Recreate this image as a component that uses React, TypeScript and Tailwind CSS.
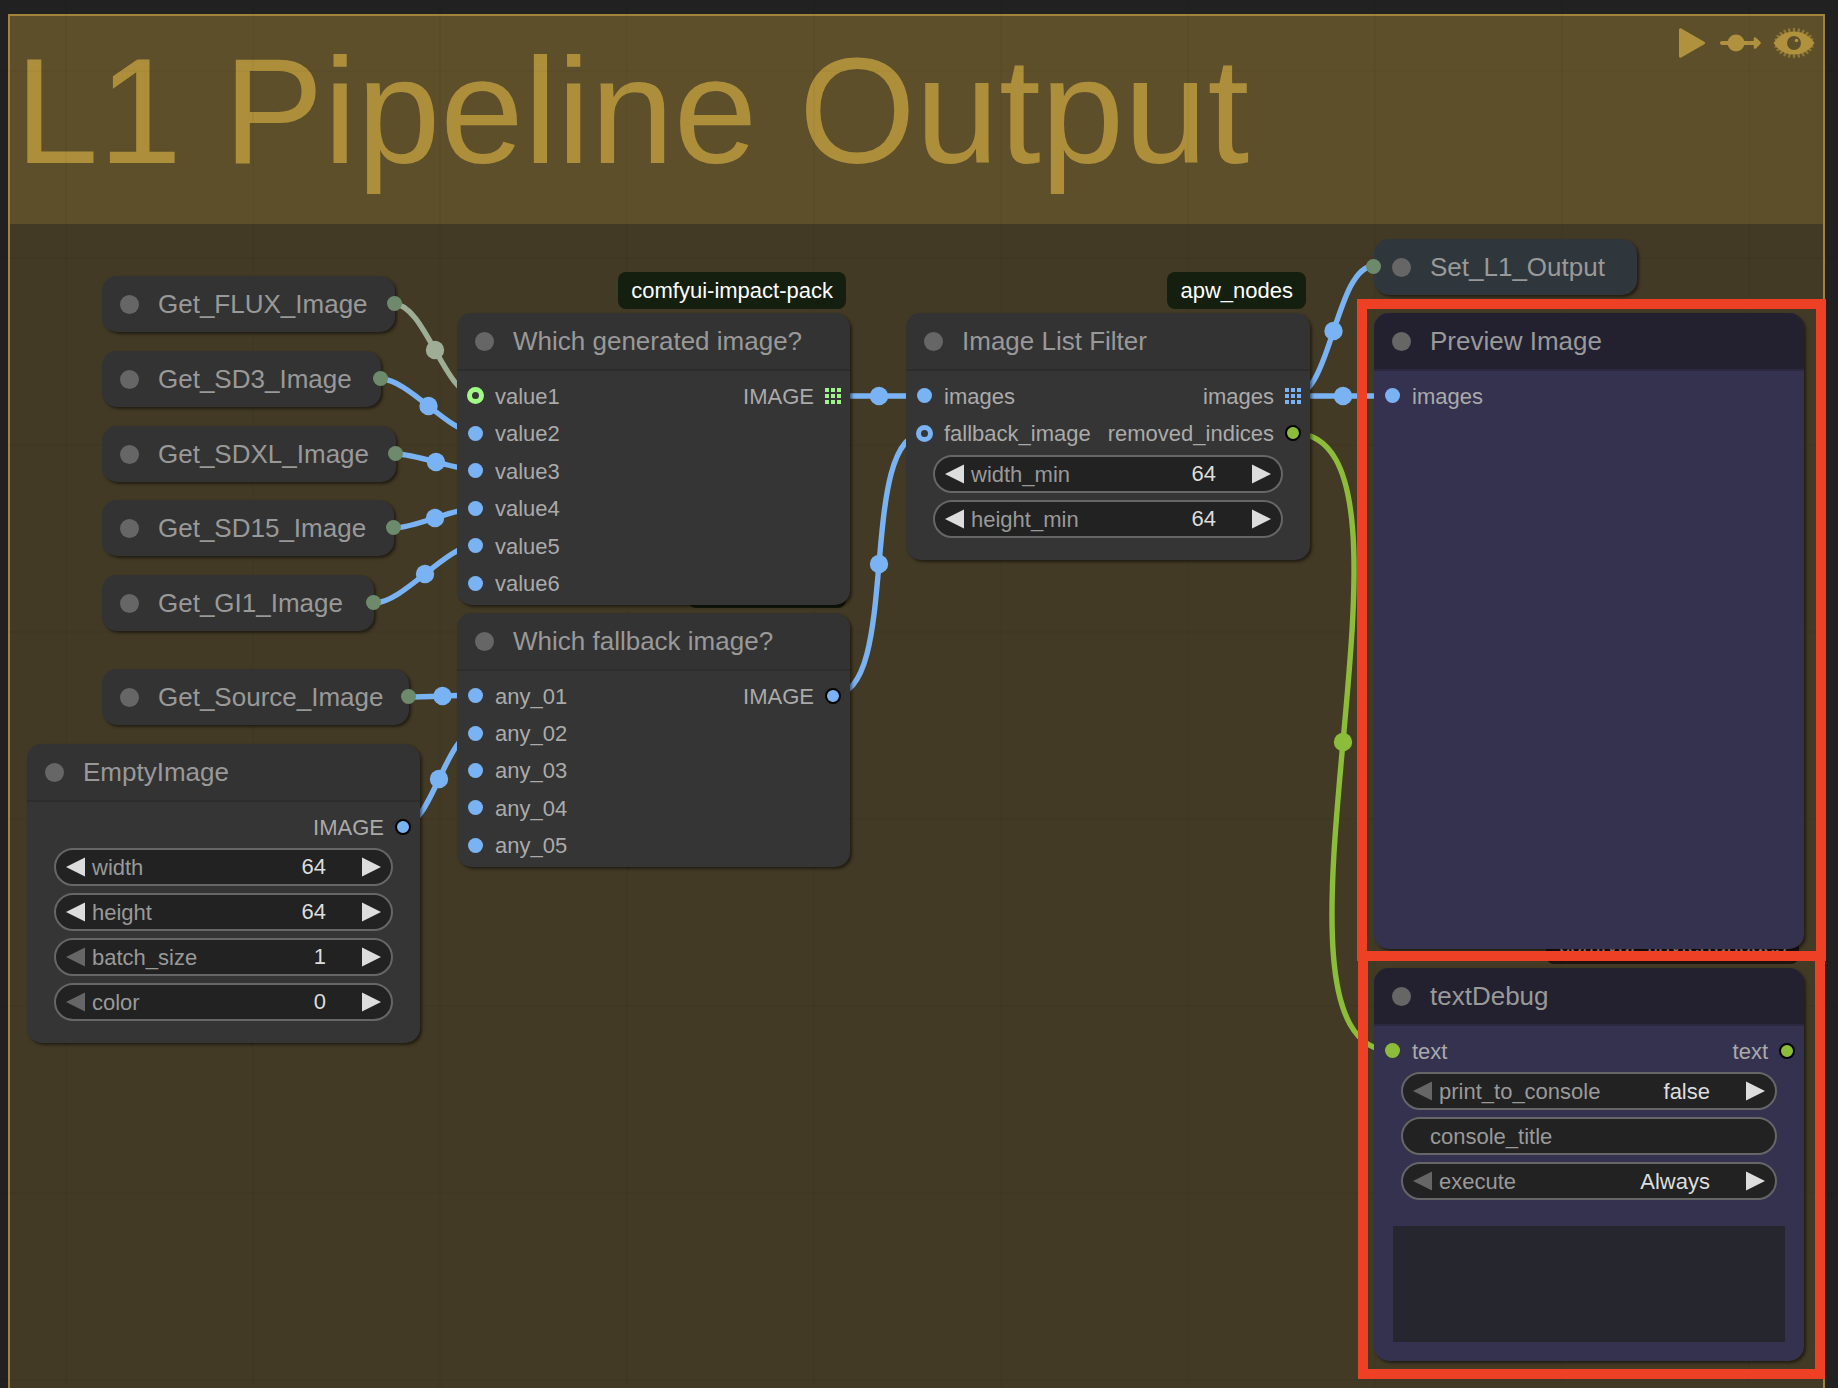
import { useId, type ReactNode } from 'react'
import clsx from 'clsx'

const BLUE = '#7ab3f3'
const GREEN = '#8bbd3a'
const SAGE = '#9dad96'

interface Link {
    from: [number, number]
    to: [number, number]
    color: string
}

const links: Link[] = [
    { from: [394, 304], to: [476, 396], color: SAGE },
    { from: [381, 379], to: [476, 433], color: BLUE },
    { from: [396, 454], to: [476, 470], color: BLUE },
    { from: [394, 528], to: [476, 508], color: BLUE },
    { from: [374, 603], to: [476, 545], color: BLUE },
    { from: [409, 697], to: [476, 695], color: BLUE },
    { from: [402, 826], to: [476, 732], color: BLUE },
    { from: [833, 396], to: [925, 396], color: BLUE },
    { from: [833, 695], to: [925, 433], color: BLUE },
    { from: [1293, 396], to: [1374, 266], color: BLUE },
    { from: [1293, 396], to: [1393, 396], color: BLUE },
    { from: [1293, 433], to: [1393, 1051], color: GREEN },
]

const getters = [
    { name: 'Get_FLUX_Image', place: 'left-[102px] top-[276px] w-[293px]' },
    { name: 'Get_SD3_Image', place: 'left-[102px] top-[351px] w-[279px]' },
    { name: 'Get_SDXL_Image', place: 'left-[102px] top-[426px] w-[294px]' },
    { name: 'Get_SD15_Image', place: 'left-[102px] top-[500px] w-[292px]' },
    { name: 'Get_GI1_Image', place: 'left-[102px] top-[575px] w-[272px]' },
    { name: 'Get_Source_Image', place: 'left-[102px] top-[669px] w-[307px]' },
]

// control points sit a quarter of the link's length out from each end
function Links() {
    return (
        <svg className="absolute inset-0 w-full h-full pointer-events-none" fill="none" aria-hidden="true">
            {links.map(({ from, to, color }, i) => {
                const d = Math.hypot(to[0] - from[0], to[1] - from[1]) / 4
                return (
                    <g key={i}>
                        <path
                            d={`M${from[0]} ${from[1]} C${from[0] + d} ${from[1]} ${to[0] - d} ${to[1]} ${to[0]} ${to[1]}`}
                            stroke={color}
                            strokeWidth="5.4"
                        />
                        <circle cx={(from[0] + to[0]) / 2} cy={(from[1] + to[1]) / 2} r="9.2" fill={color} />
                    </g>
                )
            })}
        </svg>
    )
}

type SocketKind = 'blue' | 'green' | 'blueOut' | 'greenOut' | 'blueRing' | 'limeRing' | 'blueGrid' | 'limeGrid'

function Socket({ kind }: { kind: SocketKind }) {
    if (kind === 'blueGrid' || kind === 'limeGrid') {
        return (
            <span className="grid grid-cols-3 gap-[2px] size-4 shrink-0">
                {Array.from({ length: 9 }, (_, i) => (
                    <span key={i} className={kind === 'blueGrid' ? 'bg-[#7ab3f3]' : 'bg-[#9ff388]'} />
                ))}
            </span>
        )
    }
    return (
        <span
            className={clsx(
                'rounded-full shrink-0',
                kind === 'blue' && 'size-[15px] bg-[#7ab3f3]',
                kind === 'green' && 'size-[15px] bg-[#8bbd3a]',
                kind === 'blueOut' && 'size-4 bg-[#7ab3f3] border-2 border-black',
                kind === 'greenOut' && 'size-4 bg-[#8bbd3a] border-2 border-black',
                kind === 'blueRing' && 'size-[17px] -mx-px border-[5px] border-[#7ab3f3]',
                kind === 'limeRing' && 'size-[17px] -mx-px border-[5px] border-[#9ffb85]',
            )}
        />
    )
}

interface Port {
    label: string
    kind: SocketKind
}

function SlotRow({ input, output }: { input?: Port; output?: Port }) {
    return (
        <div className="flex items-center pl-[11px] pr-[9px] text-[22px] leading-[26px] text-[#aaaaaa]">
            {input && (
                <span className="flex items-center gap-3">
                    <Socket kind={input.kind} />
                    <span className="pt-0.5">{input.label}</span>
                </span>
            )}
            {output && (
                <span className="flex items-center gap-[11px] ml-auto">
                    <span className="pt-0.5">{output.label}</span>
                    <Socket kind={output.kind} />
                </span>
            )}
        </div>
    )
}

// rows share the list's height evenly
function SlotList({ size, children }: { size: string; children: ReactNode }) {
    return <div className={clsx('grid auto-rows-fr', size)}>{children}</div>
}

interface NodeProps {
    title: string
    place: string
    tone?: 'gray' | 'violet'
    badge?: string
    children: ReactNode
}

function GraphNode({ title, place, tone = 'gray', badge, children }: NodeProps) {
    const violet = tone === 'violet'
    return (
        <article
            className={clsx(
                'absolute rounded-[15px] shadow-[2px_2px_3px_rgba(0,0,0,0.5)]',
                violet ? 'bg-[#353250]' : 'bg-[#353535]',
                place,
            )}
        >
            {badge && (
                <span className="absolute right-1 -top-[41px] h-[37px] px-[13px] rounded-lg bg-[#141f10] text-[22px] leading-[38px] text-white whitespace-nowrap">
                    {badge}
                </span>
            )}
            <header
                className={clsx(
                    'flex items-center gap-[19px] h-14 pl-[18px] rounded-t-[15px]',
                    violet ? 'bg-[#232130]' : 'bg-[#333333]',
                )}
            >
                <span className="size-[19px] rounded-full bg-[#666666]" />
                <h2 className="text-[26px] text-[#999999]">{title}</h2>
            </header>
            <div className={clsx('pt-1.5 border-t-2', violet ? 'border-[#2b2840]' : 'border-[#2d2d2d]')}>
                {children}
            </div>
        </article>
    )
}

function CollapsedNode({ name, place, setter }: { name: string; place: string; setter?: boolean }) {
    return (
        <article
            className={clsx(
                'absolute flex items-center gap-[19px] h-14 pl-[18px] rounded-[15px] shadow-[2px_2px_3px_rgba(0,0,0,0.5)]',
                setter ? 'bg-[#2f363c]' : 'bg-[#333333]',
                place,
            )}
        >
            <span className="size-[19px] rounded-full bg-[#666666]" />
            <h2 className="text-[26px] text-[#999999] whitespace-nowrap">{name}</h2>
            <span
                className={clsx(
                    'absolute top-5 size-[15px] rounded-full bg-[#6d8a6a]',
                    setter ? '-left-2' : '-right-[7px]',
                )}
            />
        </article>
    )
}

function Arrow({ dir, off, label }: { dir: 'left' | 'right'; off?: boolean; label: string }) {
    return (
        <button type="button" aria-label={label} disabled={off} className="shrink-0">
            <svg width="19" height="20" viewBox="0 0 19 20" className={off ? 'fill-[#666666]' : 'fill-[#dddddd]'}>
                <path d={dir === 'left' ? 'M0 10 L19 0.5 V19.5 Z' : 'M0 0.5 L19 10 L0 19.5 Z'} />
            </svg>
        </button>
    )
}

interface WidgetProps {
    name: string
    value: string
    options?: string[]
    atMin?: boolean
}

function Widget({ name, value, options, atMin }: WidgetProps) {
    const id = useId()
    const field = 'flex-1 min-w-0 h-full bg-transparent text-right text-[#dddddd] outline-none'
    return (
        <div className="flex items-center h-[38px] px-[10px] rounded-full border-2 border-[#666666] bg-[#222222] text-[22px]">
            <Arrow dir="left" off={atMin} label={`Previous ${name}`} />
            <label htmlFor={id} className="ml-[7px] text-[#999999]">
                {name}
            </label>
            {options ? (
                <select id={id} defaultValue={value} className={clsx(field, 'appearance-none [text-align-last:right]')}>
                    {options.map(o => (
                        <option key={o}>{o}</option>
                    ))}
                </select>
            ) : (
                <input id={id} defaultValue={value} inputMode="numeric" className={field} />
            )}
            <span className="w-9 shrink-0" />
            <Arrow dir="right" label={`Next ${name}`} />
        </div>
    )
}

function WidgetList({ children }: { children: ReactNode }) {
    return <div className="flex flex-col gap-[7px] pt-[3px] px-[27px] pb-[22px]">{children}</div>
}

const lashes = [-75, -60, -45, -30, -15, 0, 15, 30, 45, 60, 75]

function GroupTools() {
    return (
        <div className="flex items-center gap-3.5 h-[30px] mt-3 mr-2 text-[#b0923e]">
            <button type="button" aria-label="Queue group">
                <svg width="28" height="30" viewBox="0 0 28 30" fill="currentColor" stroke="currentColor" strokeWidth="3" strokeLinejoin="round">
                    <path d="M2.5 1.8 L25.5 15 L2.5 28.2 Z" />
                </svg>
            </button>
            <button type="button" aria-label="Bypass group">
                <svg width="41" height="30" viewBox="0 0 41 30" fill="currentColor" stroke="currentColor" strokeLinecap="round" strokeLinejoin="round">
                    <path d="M2 15 H36" strokeWidth="4" />
                    <circle cx="16" cy="15" r="8.5" stroke="none" />
                    <path d="M35 10.5 L39.5 15 L35 19.5 Z" strokeWidth="2.5" />
                </svg>
            </button>
            <button type="button" aria-label="Mute group" className="-ml-0.5">
                <svg width="42" height="32" viewBox="0 0 42 32">
                    <g stroke="currentColor" strokeWidth="2.4" strokeLinecap="round" opacity="0.6">
                        {lashes.map(a => {
                            const r = (a * Math.PI) / 180
                            const x = Math.sin(r)
                            const y = Math.cos(r)
                            return (
                                <g key={a}>
                                    <path d={`M${21 + x * 14} ${16 - y * 9} L${21 + x * 19} ${16 - y * 14}`} />
                                    <path d={`M${21 + x * 14} ${16 + y * 9} L${21 + x * 19} ${16 + y * 14}`} />
                                </g>
                            )
                        })}
                    </g>
                    <path d="M0.5 16 Q8 4.5 21 4.5 Q34 4.5 41.5 16 Q34 27.5 21 27.5 Q8 27.5 0.5 16 Z" fill="currentColor" />
                    <circle cx="21" cy="16" r="7" fill="#5e4f2b" />
                    <circle cx="23.5" cy="13.5" r="1.8" fill="currentColor" />
                </svg>
            </button>
        </div>
    )
}

export default function App() {
    const titleId = useId()

    return (
        <main className="relative flex flex-col min-h-screen pt-3.5 pl-2 pr-[13px] overflow-hidden bg-[#212121] font-['Liberation_Sans',Arial,sans-serif]">
            <section className="flex-1 min-h-[1374px] border-2 border-b-0 border-[#a3833b] bg-[#433a25]">
                <header className="flex items-start justify-between h-52 pl-[5px] bg-[#5e4f2b]">
                    <h1 className="text-[150px] leading-[190px] text-[#ad8f3b] whitespace-nowrap">L1 Pipeline Output</h1>
                    <GroupTools />
                </header>
            </section>

            {/* canvas grid */}
            <div className="absolute inset-0 pointer-events-none bg-[linear-gradient(to_right,rgba(0,0,0,0.04)_2px,transparent_2px),linear-gradient(to_bottom,rgba(0,0,0,0.03)_2px,transparent_2px)] bg-size-[187px_187px] bg-position-[65px_70px]" />

            <Links />

            {/* badges that the nodes above them cover */}
            <span className="absolute left-[688px] top-[571px] w-[158px] h-[37px] rounded-lg bg-[#141a0d]" />
            <span className="absolute left-[1546px] top-[927px] h-[37px] px-[13px] rounded-lg bg-[#20130f] text-[22px] leading-[38px] text-[#d0aaa0] whitespace-nowrap">
                comfyui_tinyterranodes
            </span>

            {getters.map(g => (
                <CollapsedNode key={g.name} name={g.name} place={g.place} />
            ))}
            <CollapsedNode name="Set_L1_Output" place="left-[1374px] top-[239px] w-[263px]" setter />

            <GraphNode title="Which generated image?" place="left-[457px] top-[313px] w-[393px] h-[292px]" badge="comfyui-impact-pack">
                <SlotList size="h-[225px]">
                    <SlotRow input={{ label: 'value1', kind: 'limeRing' }} output={{ label: 'IMAGE', kind: 'limeGrid' }} />
                    {['value2', 'value3', 'value4', 'value5', 'value6'].map(label => (
                        <SlotRow key={label} input={{ label, kind: 'blue' }} />
                    ))}
                </SlotList>
            </GraphNode>

            <GraphNode title="Which fallback image?" place="left-[457px] top-[613px] w-[393px] h-[254px]">
                <SlotList size="h-[187px]">
                    <SlotRow input={{ label: 'any_01', kind: 'blue' }} output={{ label: 'IMAGE', kind: 'blueOut' }} />
                    {['any_02', 'any_03', 'any_04', 'any_05'].map(label => (
                        <SlotRow key={label} input={{ label, kind: 'blue' }} />
                    ))}
                </SlotList>
            </GraphNode>

            <GraphNode title="EmptyImage" place="left-[27px] top-[744px] w-[393px]">
                <SlotList size="h-[37px]">
                    <SlotRow output={{ label: 'IMAGE', kind: 'blueOut' }} />
                </SlotList>
                <WidgetList>
                    <Widget name="width" value="64" />
                    <Widget name="height" value="64" />
                    <Widget name="batch_size" value="1" atMin />
                    <Widget name="color" value="0" atMin />
                </WidgetList>
            </GraphNode>

            <GraphNode title="Image List Filter" place="left-[906px] top-[313px] w-[404px]" badge="apw_nodes">
                <SlotList size="h-[75px]">
                    <SlotRow input={{ label: 'images', kind: 'blue' }} output={{ label: 'images', kind: 'blueGrid' }} />
                    <SlotRow
                        input={{ label: 'fallback_image', kind: 'blueRing' }}
                        output={{ label: 'removed_indices', kind: 'greenOut' }}
                    />
                </SlotList>
                <WidgetList>
                    <Widget name="width_min" value="64" />
                    <Widget name="height_min" value="64" />
                </WidgetList>
            </GraphNode>

            <GraphNode title="Preview Image" place="left-[1374px] top-[313px] w-[430px] min-h-[636px]" tone="violet">
                <SlotList size="h-[37px]">
                    <SlotRow input={{ label: 'images', kind: 'blue' }} />
                </SlotList>
            </GraphNode>

            <GraphNode title="textDebug" place="left-[1374px] top-[968px] w-[430px]" tone="violet">
                <SlotList size="h-[37px]">
                    <SlotRow input={{ label: 'text', kind: 'green' }} output={{ label: 'text', kind: 'greenOut' }} />
                </SlotList>
                <WidgetList>
                    <Widget name="print_to_console" value="false" options={['false', 'true']} atMin />
                    <div className="flex items-center h-[38px] px-[27px] rounded-full border-2 border-[#666666] bg-[#222222] text-[22px]">
                        <label htmlFor={titleId} className="text-[#999999]">
                            console_title
                        </label>
                        <input id={titleId} className="flex-1 min-w-0 ml-3 bg-transparent text-[#dddddd] outline-none" />
                    </div>
                    <Widget name="execute" value="Always" options={['Always', 'Never']} atMin />
                </WidgetList>
                <div className="pt-1 px-[19px] pb-[19px]">
                    <textarea
                        aria-label="text output"
                        className="block w-full h-[116px] resize-none bg-[#26262e] text-[#dddddd] outline-none"
                    />
                </div>
            </GraphNode>

            {/* highlight frames */}
            <div className="absolute left-[1357px] top-[299px] w-[469px] h-[662px] border-[10px] border-[#ed4024] pointer-events-none" />
            <div className="absolute left-[1358px] top-[951px] w-[467px] h-[428px] border-[10px] border-[#ed4024] pointer-events-none" />
        </main>
    )
}
